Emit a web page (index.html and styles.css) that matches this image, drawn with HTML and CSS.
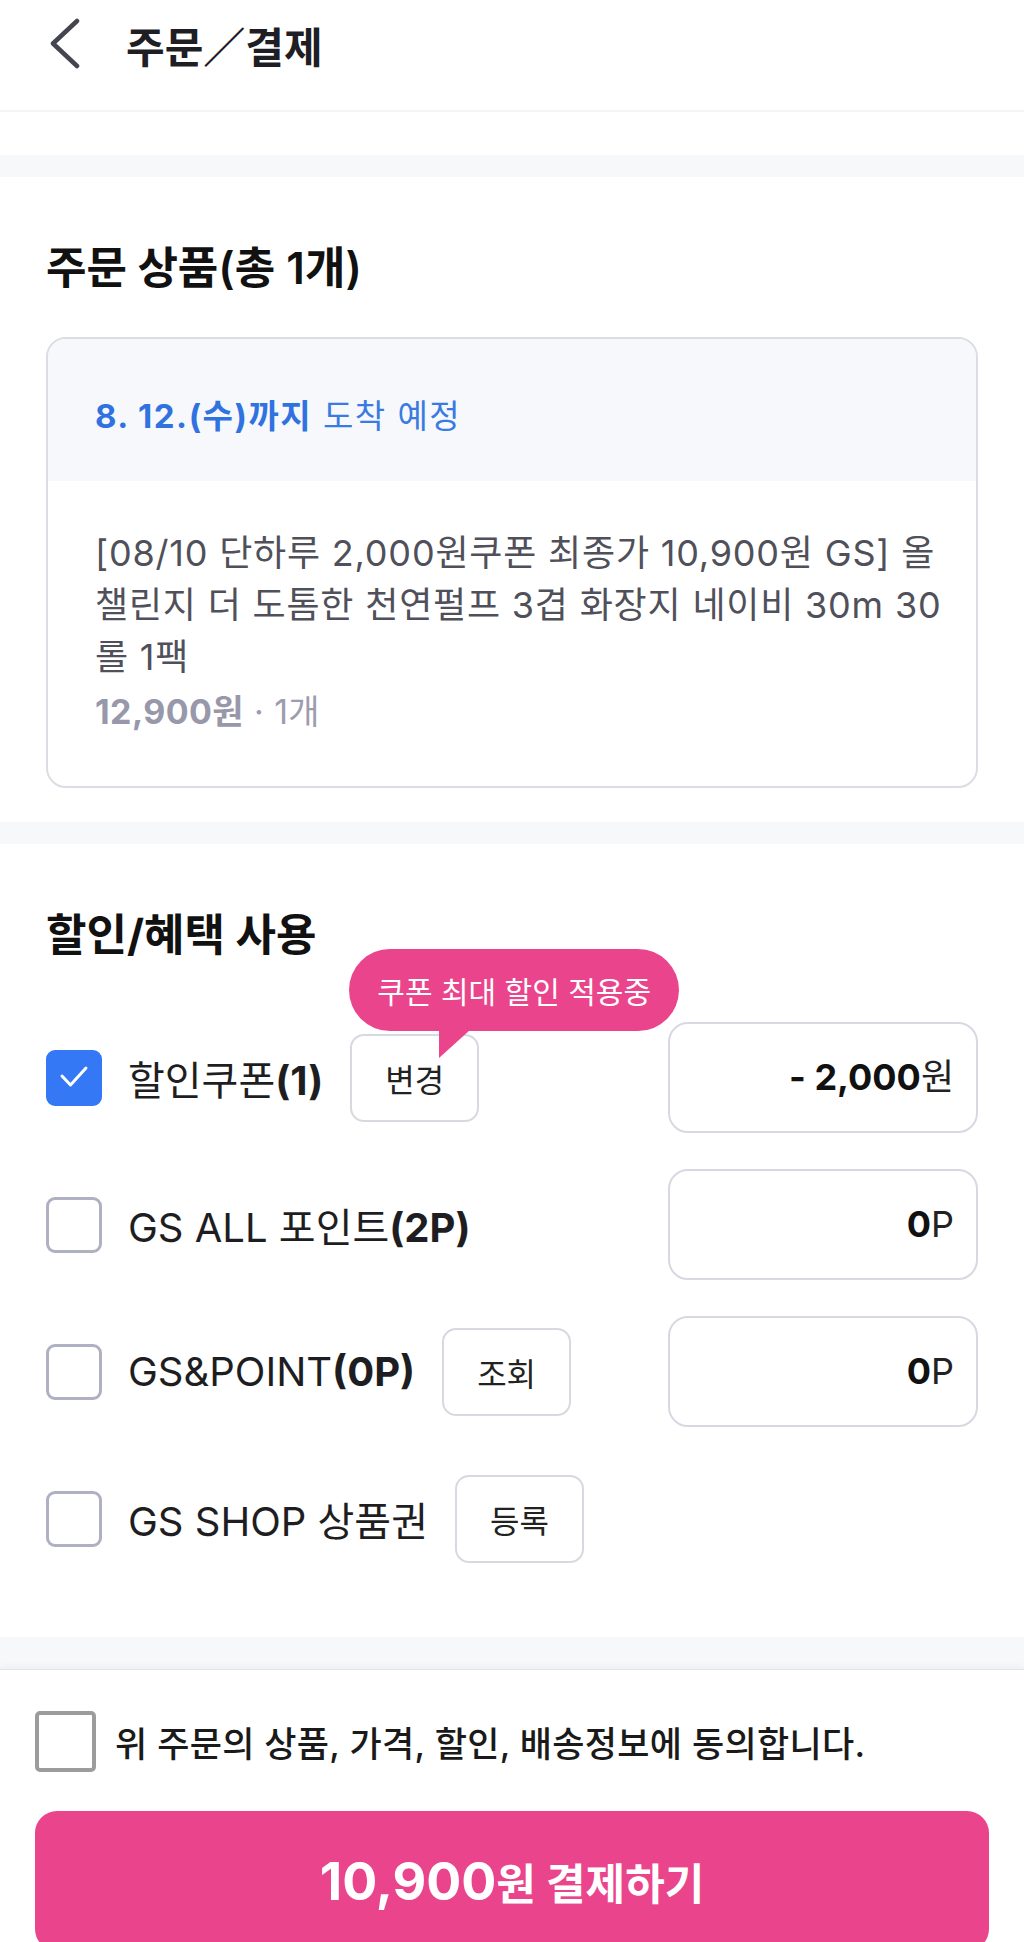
FILE: index.html
```html
<!DOCTYPE html>
<html lang="ko">

<head>
    <meta content="text/html; charset=utf-8" http-equiv="Content-Type">
    <title>주문/결제</title>

    <link rel="stylesheet" href="styles.css">
</head>

<body>

    <div class="header">
        <a class="backButton" href="#">
            <svg width="34" height="52" viewBox="0 0 34 52">
                <path d="M29 3 L5 25.5 L29 48" fill="none" stroke="#45454f" stroke-width="4.5" stroke-linecap="round" stroke-linejoin="round"/>
            </svg>
        </a>
        <h1 class="headerTitle">주문／결제</h1>
    </div>
    <div class="headerGap"></div>
    <div class="divider"></div>

    <div class="section orderSection">
        <h2 class="sectionTitle">주문 상품<span class="titleCount">(총 1개)</span></h2>
        <div class="orderBox">
            <div class="deliveryInfo"><strong>8. 12.(수)까지</strong> 도착 예정</div>
            <div class="productInfo">
                <p class="productName">[08/10 단하루 2,000원쿠폰 최종가 10,900원 GS] 올 챌린지 더 도톰한 천연펄프 3겹 화장지 네이비 30m 30롤 1팩</p>
                <p class="productPrice"><strong>12,900원</strong> · 1개</p>
            </div>
        </div>
    </div>
    <div class="divider"></div>

    <div class="section benefitSection">
        <h2 class="sectionTitle">할인/혜택 사용</h2>
        <div class="benefitList">
            <div class="benefitRow">
                <span class="checkBox checked">
                    <svg width="30" height="30" viewBox="0 0 30 30">
                        <path d="M3 13 L11.5 22 L27 5" fill="none" stroke="#fff" stroke-width="3" stroke-linecap="round" stroke-linejoin="round"/>
                    </svg>
                </span>
                <span class="benefitLabel">할인쿠폰<b>(1)</b></span>
                <span class="tipWrap">
                    <span class="couponTip">쿠폰 최대 할인 적용중</span>
                    <button class="smallButton">변경</button>
                </span>
                <div class="amountBox"><b>- 2,000</b>원</div>
            </div>
            <div class="benefitRow">
                <span class="checkBox"></span>
                <span class="benefitLabel">GS ALL 포인트<b>(2P)</b></span>
                <div class="amountBox"><b>0</b>P</div>
            </div>
            <div class="benefitRow">
                <span class="checkBox"></span>
                <span class="benefitLabel">GS&amp;POINT<b>(0P)</b></span>
                <button class="smallButton">조회</button>
                <div class="amountBox"><b>0</b>P</div>
            </div>
            <div class="benefitRow">
                <span class="checkBox"></span>
                <span class="benefitLabel">GS SHOP 상품권</span>
                <button class="smallButton">등록</button>
            </div>
        </div>
    </div>
    <div class="divider bottomDivider"></div>

    <div class="bottomBar">
        <label class="agreeRow">
            <span class="agreeBox"></span>
            <span class="agreeText">위 주문의 상품, 가격, 할인, 배송정보에 동의합니다.</span>
        </label>
        <button class="payButton"><span class="payAmount">10,900</span>원 결제하기</button>
    </div>

</body>

</html>
```

FILE: styles.css
```css
* {
    box-sizing: border-box;
}

body {
    margin: 0;
    background: #fff;
    font-family: "Inter", "Noto Sans CJK KR", sans-serif;
    color: #222;
}

button {
    font-family: inherit;
}

.header {
    display: flex;
    align-items: center;
    height: 112px;
    padding: 0 0 22px 48px;
    border-bottom: 2px solid #f4f4f6;
}

.backButton {
    display: block;
    height: 52px;
}

.headerTitle {
    margin: 0 0 0 44px;
    font-size: 42px;
    font-weight: 700;
    color: #1e1e24;
}

.headerGap {
    height: 43px;
}

.divider {
    height: 22px;
    background: #f7f8fa;
}

.section {
    padding: 66px 46px 37px;
}

.orderSection {
    padding-bottom: 34px;
}

.sectionTitle {
    margin: 0;
    font-size: 44px;
    line-height: 50px;
    font-weight: 700;
    color: #111;
}

.titleCount {
    font-weight: 600;
}

.orderBox {
    margin-top: 44px;
    border: 2px solid #dcdce4;
    border-radius: 20px;
    overflow: hidden;
}

.deliveryInfo {
    height: 142px;
    padding: 59px 0 0 47px;
    background: #f7f8fb;
    font-size: 33px;
    line-height: 36px;
    letter-spacing: 1.5px;
    color: #3a7be2;
}

.deliveryInfo strong {
    color: #2f72e0;
}

.productInfo {
    padding: 46px 34px 52px 47px;
}

.productName {
    margin: 0;
    font-size: 36px;
    line-height: 52px;
    letter-spacing: 0.8px;
    word-break: break-all;
    color: #50505a;
}

.productPrice {
    margin: 7px 0 0;
    font-size: 34px;
    line-height: 44px;
    letter-spacing: 0.4px;
    color: #9c9cae;
}

.productPrice strong {
    color: #9898ab;
}

.benefitSection {
    padding-bottom: 63px;
}

.benefitList {
    display: flex;
    flex-direction: column;
    gap: 36px;
    margin-top: 62px;
}

.benefitRow {
    display: flex;
    align-items: center;
    min-height: 111px;
}

.checkBox {
    display: flex;
    align-items: center;
    justify-content: center;
    width: 56px;
    height: 56px;
    flex-shrink: 0;
    border: 3px solid #b0b0c3;
    border-radius: 9px;
}

.checkBox.checked {
    background: #3478f6;
    border-color: #3478f6;
}

.benefitLabel {
    margin-left: 26px;
    font-size: 40px;
    color: #1e1e22;
}

.tipWrap {
    position: relative;
    margin-left: 27px;
}

.smallButton {
    display: block;
    height: 88px;
    padding: 0 33px;
    margin-left: 27px;
    border: 2px solid #d8d8e0;
    border-radius: 14px;
    background: #fff;
    font-size: 32px;
    color: #222;
}

.tipWrap .smallButton {
    margin-left: 0;
}

.couponTip {
    position: absolute;
    left: -1px;
    bottom: calc(100% + 3px);
    display: flex;
    align-items: center;
    height: 82px;
    padding: 0 28px;
    border-radius: 41px;
    background: #ea458c;
    color: #fff;
    font-size: 30px;
    white-space: nowrap;
}

.couponTip::after {
    content: "";
    position: absolute;
    left: 90px;
    top: 100%;
    margin-top: -1px;
    border-top: 28px solid #ea458c;
    border-right: 31px solid transparent;
}

.amountBox {
    width: 310px;
    height: 111px;
    margin-left: auto;
    padding-right: 22px;
    border: 2px solid #d8d8e2;
    border-radius: 20px;
    font-size: 36px;
    line-height: 107px;
    text-align: right;
    color: #222;
}

.amountBox b {
    font-weight: 700;
    color: #111;
}

.bottomDivider {
    height: 32px;
}

.bottomBar {
    padding: 41px 35px 0;
    border-top: 1px solid #e4e4e7;
    box-shadow: 0 -3px 6px rgba(0, 0, 0, 0.04);
}

.agreeRow {
    display: flex;
    align-items: center;
}

.agreeBox {
    width: 61px;
    height: 61px;
    flex-shrink: 0;
    border: 4px solid #9c9c9c;
    border-radius: 5px;
}

.agreeText {
    margin-left: 19px;
    font-size: 35px;
    font-weight: 500;
    letter-spacing: 0.3px;
    color: #1a1a1a;
}

.payButton {
    display: block;
    width: 100%;
    height: 140px;
    margin-top: 39px;
    border: none;
    border-radius: 22px;
    background: #ea458c;
    color: #fff;
    font-size: 43px;
    font-weight: 700;
}

.payAmount {
    font-size: 52px;
}
```
